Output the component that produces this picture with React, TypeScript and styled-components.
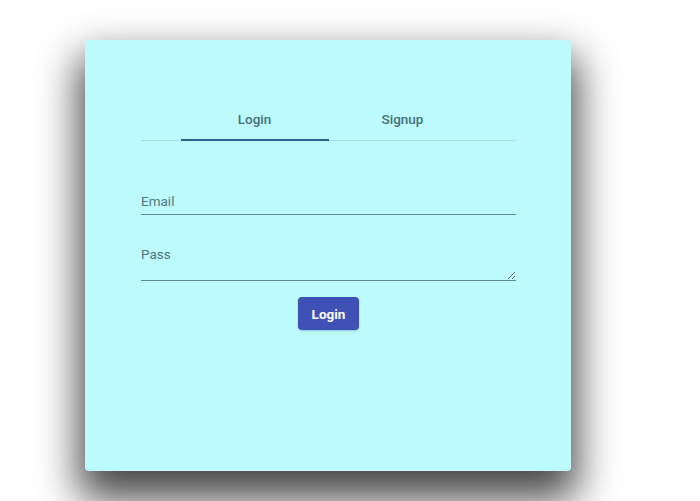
import React, { useState } from 'react';
import styled, { createGlobalStyle } from 'styled-components';

const GlobalStyle = createGlobalStyle`
  html, body {
    margin: 0;
    padding: 0;
    background: #ffffff;
    font-family: Roboto, 'Liberation Sans', sans-serif;
  }
`;

function App() {
  const [tab, setTab] = useState(0);

  return (
    <Page>
      <GlobalStyle />
      <Card>
        <Content>
          <TabBar>
            <Tab $active={tab === 0} onClick={() => setTab(0)}>
              Login
            </Tab>
            <Tab $active={tab === 1} onClick={() => setTab(1)}>
              Signup
            </Tab>
          </TabBar>
          <Form onSubmit={(e) => e.preventDefault()}>
            <EmailInput type="email" placeholder="Email" />
            <PassInput placeholder="Pass" rows={2} />
            <SubmitButton type="submit">Login</SubmitButton>
          </Form>
        </Content>
      </Card>
    </Page>
  );
}

export default App;

const Page = styled.div`
  width: 700px;
  height: 501px;
  padding: 40px 0 0 85px;
  box-sizing: border-box;
  overflow: hidden;
`;

const Card = styled.div`
  width: 486px;
  height: 431px;
  background: #bcfafd;
  border-radius: 4px;
  box-shadow: 0 22px 40px 6px rgba(0, 0, 0, 0.72);
  padding: 54px 0 0 56px;
  box-sizing: border-box;
`;

const Content = styled.div`
  width: 375px;
  display: flex;
  flex-direction: column;
`;

const TabBar = styled.div`
  display: flex;
  justify-content: center;
  border-bottom: 1px solid #a8dfe3;
`;

const Tab = styled.button<{ $active: boolean }>`
  width: 148px;
  height: 47px;
  border: none;
  background: transparent;
  font-family: Roboto, 'Liberation Sans', sans-serif;
  font-size: 13.5px;
  font-weight: 500;
  color: #44707a;
  cursor: pointer;
  padding: 4px 0 0;
  border-bottom: 2px solid ${(p) => (p.$active ? '#2f5e92' : 'transparent')};
  margin-bottom: -1px;
`;

const Form = styled.form`
  display: flex;
  flex-direction: column;
  padding-top: 49px;
`;

const fieldBase = `
  width: 100%;
  box-sizing: border-box;
  border: none;
  border-bottom: 1px solid #5f8c92;
  background: transparent;
  font-family: Roboto, 'Liberation Sans', sans-serif;
  font-size: 13.5px;
  color: #2d4b50;
  padding: 0;
  outline: none;

  &::placeholder {
    color: #4f777d;
    opacity: 1;
  }
`;

const EmailInput = styled.input`
  ${fieldBase}
  height: 25px;
  line-height: 22px;
  padding-bottom: 2px;
`;

const PassInput = styled.textarea`
  ${fieldBase}
  margin-top: 29px;
  height: 37px;
  padding-top: 2px;
  line-height: 17px;
  display: block;
`;

const SubmitButton = styled.button`
  align-self: center;
  margin-top: 16px;
  width: 61px;
  height: 33px;
  border: none;
  border-radius: 4px;
  background: #3f51b5;
  color: #ffffff;
  font-family: Roboto, 'Liberation Sans', sans-serif;
  font-size: 13.5px;
  font-weight: 700;
  cursor: pointer;
  box-shadow: 0 1px 2px rgba(0, 0, 0, 0.2);
`;
